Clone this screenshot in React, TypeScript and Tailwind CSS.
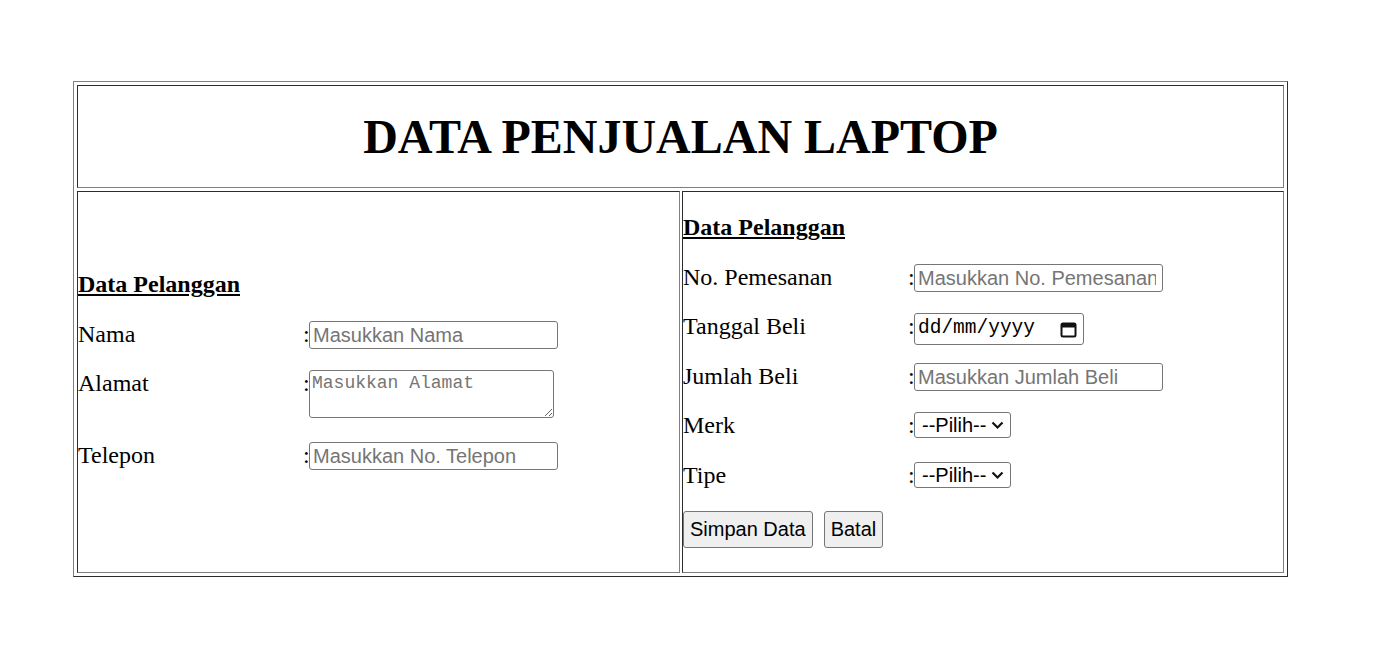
import React from 'react';

const cell =
  'border border-t-[#2c2c2c] border-l-[#2c2c2c] border-b-[#808080] border-r-[#808080]';
const field =
  "border border-[#767676] rounded-[3px] bg-white font-['Liberation_Sans',Arial,sans-serif] text-[20px] text-black placeholder:text-[#757575] outline-none";

function Label({ children }: { children: React.ReactNode }) {
  return (
    <>
      <div className="w-[225px] shrink-0 leading-[28px]">{children}</div>
      <span className="w-[6px] shrink-0 leading-[28px]">:</span>
    </>
  );
}

function TextField({ placeholder, extra = '' }: { placeholder: string; extra?: string }) {
  return (
    <input
      type="text"
      placeholder={placeholder}
      className={`${field} mt-[1px] block h-[28px] w-[249px] pl-[3px] ${extra}`}
    />
  );
}

function Pilih() {
  return (
    <div className="relative mt-[1px] h-[26px] w-[97px]">
      <select
        className={`${field} block h-[26px] w-[97px] appearance-none pl-[7px] leading-[24px]`}
        defaultValue=""
      >
        <option value="">--Pilih--</option>
      </select>
      {/* panah dropdown */}
      <svg
        className="pointer-events-none absolute left-[77px] top-[9px]"
        width="13"
        height="9"
        viewBox="0 0 13 9"
      >
        <polyline points="1.5,1.5 6.5,6.5 11.5,1.5" fill="none" stroke="#111" strokeWidth="2.2" />
      </svg>
    </div>
  );
}

function DateField() {
  return (
    <div className="mt-[1px] flex h-[32px] w-[170px] items-center justify-between rounded-[3px] border border-[#767676] bg-white pl-[3px] pr-[6px]">
      <span className="font-['Liberation_Mono',monospace] text-[19.5px] leading-none text-black">dd/mm/yyyy</span>
      <svg width="17" height="17" viewBox="0 0 17 17">
        <rect x="1.5" y="2.5" width="14" height="13" rx="1.5" fill="none" stroke="#111" strokeWidth="2" />
        <rect x="1.5" y="2.5" width="14" height="4" fill="#111" />
      </svg>
    </div>
  );
}

function Btn({ children }: { children: React.ReactNode }) {
  return (
    <button
      type="button"
      className="h-[37px] rounded-[3px] border border-[#767676] bg-[#efefef] px-[6px] font-['Liberation_Sans',Arial,sans-serif] text-[20px] leading-[23px] text-black"
    >
      {children}
    </button>
  );
}

export default function App() {
  return (
    <div className="min-h-screen bg-white pl-[73px] pt-[81px] font-['Liberation_Serif','Times_New_Roman',serif] text-[24px] text-black">
      <div className="flex w-[1215px] flex-col gap-[3px] border border-t-[#808080] border-l-[#808080] border-b-[#2c2c2c] border-r-[#2c2c2c] p-[3px]">
        {/* judul */}
        <div className={`${cell} flex h-[103px] items-center justify-center`}>
          <h1 className="text-[48px] font-bold leading-none">DATA PENJUALAN LAPTOP</h1>
        </div>

        <div className="flex h-[382px] gap-[2px]">
          {/* kiri */}
          <div className={`${cell} flex w-[603px] flex-col pt-[78px]`}>
            <div className="font-bold leading-[28px] underline">Data Pelanggan</div>
            <div className="mt-[22px] flex items-start">
              <Label>Nama</Label>
              <TextField placeholder="Masukkan Nama" />
            </div>
            <div className="mt-[20px] flex items-start">
              <Label>Alamat</Label>
              <textarea
                placeholder="Masukkan Alamat"
                className="mt-[1px] block h-[48px] w-[245px] resize rounded-[3px] border border-[#767676] bg-white p-[2px] font-['Liberation_Mono',monospace] text-[18px] leading-[21px] text-black outline-none placeholder:text-[#757575]"
              />
            </div>
            <div className="mt-[23px] flex items-start">
              <Label>Telepon</Label>
              <TextField placeholder="Masukkan No. Telepon" />
            </div>
          </div>

          {/* kanan */}
          <div className={`${cell} flex flex-1 flex-col pt-[21px]`}>
            <div className="font-bold leading-[28px] underline">Data Pelanggan</div>
            <div className="mt-[22px] flex items-start">
              <Label>No. Pemesanan</Label>
              <TextField placeholder="Masukkan No. Pemesanan" extra="pr-[6px]" />
            </div>
            <div className="mt-[20px] flex items-start">
              <Label>Tanggal Beli</Label>
              <DateField />
            </div>
            <div className="mt-[17px] flex items-start">
              <Label>Jumlah Beli</Label>
              <TextField placeholder="Masukkan Jumlah Beli" />
            </div>
            <div className="mt-[20px] flex items-start">
              <Label>Merk</Label>
              <Pilih />
            </div>
            <div className="mt-[22px] flex items-start">
              <Label>Tipe</Label>
              <Pilih />
            </div>
            <div className="mt-[22px] flex gap-[11px]">
              <Btn>Simpan Data</Btn>
              <Btn>Batal</Btn>
            </div>
          </div>
        </div>
      </div>
    </div>
  );
}
